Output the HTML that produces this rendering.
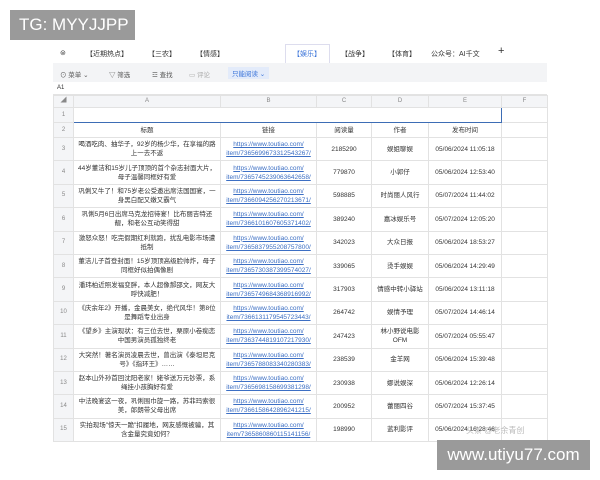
<!DOCTYPE html><html><head><meta charset="utf-8"><style>
*{margin:0;padding:0;box-sizing:border-box}
body{width:600px;height:480px;background:#fff;position:relative;overflow:hidden;font-family:"Liberation Sans","Noto Sans CJK SC",sans-serif;color:#333}
.tg{position:absolute;left:10px;top:10px;width:125px;height:30px;background:#9a9a9a;color:#fff;font-size:17px;line-height:30px;padding-left:9px}
.wm{position:absolute;left:437px;top:440px;width:153px;height:30px;background:#9a9a9a;color:#fff;font-size:17px;line-height:30px;text-align:center}
.tabs{position:absolute;left:53px;top:44px;width:494px;height:19px;font-size:7px;color:#333}
.tabs span{position:absolute;top:5px}
.act{position:absolute;left:232px;top:0;width:45px;height:19px;border:1px solid #dde;border-bottom:none;background:#fff}
.tb{position:absolute;left:53px;top:63px;width:494px;height:19px;background:#f3f4f6;font-size:6.5px;color:#555}
.tb span{position:absolute;top:6px}
.a1{position:absolute;left:53px;top:83px;width:494px;height:12px;font-size:6px;border-bottom:1px solid #e3e3e3}
table{position:absolute;left:53px;top:95px;border-collapse:collapse;table-layout:fixed;font-size:6.5px}
td{border:1px solid #e2e2e2;text-align:center;vertical-align:middle;line-height:9px;overflow:hidden;white-space:nowrap}
td.n{background:#f4f5f7;color:#888;font-size:6px}
tr.h td{background:#f4f5f7;color:#888;height:12px;font-size:6px}
tr.d td{height:23.4px}
td.t{white-space:normal;padding:0 3px}
td.l{color:#3c6fc4;text-decoration:underline}
</style></head><body>
<div class="tg">TG: MYYJJPP</div>
<div class="tabs"><div class="act"></div>
<span style="left:7px">⊜</span><span style="left:33px">【近期热点】</span><span style="left:95px">【三农】</span><span style="left:143px">【情感】</span><span style="left:240px;color:#3b74d9">【娱乐】</span><span style="left:288px">【战争】</span><span style="left:335px">【体育】</span><span style="left:378px">公众号：AI千文</span><span style="left:445px;font-size:11px;top:1px">+</span></div>
<div class="tb"><span style="left:7px">⊙ 菜单 ⌄</span><span style="left:56px">▽ 筛选</span><span style="left:99px">☲ 查找</span><span style="left:136px;color:#aaa">▭ 评论</span><span style="left:175px;color:#3b74d9;background:#e3ebfa;padding:1px 4px;top:4px">只能阅读 ⌄</span></div>
<div class="a1"><span style="position:absolute;left:4px;top:2px">A1</span></div>
<table>
<colgroup><col style="width:20px"><col style="width:147px"><col style="width:96px"><col style="width:55px"><col style="width:57px"><col style="width:73px"><col style="width:46px"></colgroup>
<tr class="h"><td>◢</td><td>A</td><td>B</td><td>C</td><td>D</td><td>E</td><td>F</td></tr>
<tr><td class="n" style="height:15px">1</td><td colspan="5" style="border:1.5px solid #3d6db5"></td><td></td></tr>
<tr><td class="n" style="height:15px">2</td><td>标题</td><td>链接</td><td>阅读量</td><td>作者</td><td>发布时间</td><td></td></tr>
<tr class="d"><td class="n">3</td><td class="t">喝酒吃肉、抽华子，92岁的杨少华，在享福的路上一去不返</td><td class="l">https://www.toutiao.com/<br>item/7365699673312543267/</td><td>2185290</td><td>娱姐聊娱</td><td>05/06/2024 11:05:18</td><td></td></tr>
<tr class="d"><td class="n">4</td><td class="t">44岁董洁和15岁儿子顶顶的首个杂志封面大片，母子温馨同框好有爱</td><td class="l">https://www.toutiao.com/<br>item/7365745239063642658/</td><td>779870</td><td>小郭仔</td><td>05/06/2024 12:53:40</td><td></td></tr>
<tr class="d"><td class="n">5</td><td class="t">巩俐又牛了！和75岁老公受邀出席法国国宴，一身黑白配又嫩又霸气</td><td class="l">https://www.toutiao.com/<br>item/7366094256270213671/</td><td>598885</td><td>时尚丽人风行</td><td>05/07/2024 11:44:02</td><td></td></tr>
<tr class="d"><td class="n">6</td><td class="t">巩俐5月6日出席马克龙招待宴！比布丽吉特还靓，和老公互动笑得甜</td><td class="l">https://www.toutiao.com/<br>item/7366101607605371402/</td><td>389240</td><td>嘉冰娱乐号</td><td>05/07/2024 12:05:20</td><td></td></tr>
<tr class="d"><td class="n">7</td><td class="t">激怒众怒！吃完假期红利就跑，扰乱电影市场遭抵制</td><td class="l">https://www.toutiao.com/<br>item/7365837955208757800/</td><td>342023</td><td>大众日报</td><td>05/06/2024 18:53:27</td><td></td></tr>
<tr class="d"><td class="n">8</td><td class="t">董洁儿子首登封面！15岁顶顶高级脸帅炸，母子同框好似拍偶像剧</td><td class="l">https://www.toutiao.com/<br>item/7365730387399574027/</td><td>339065</td><td>烫手娱娱</td><td>05/06/2024 14:29:49</td><td></td></tr>
<tr class="d"><td class="n">9</td><td class="t">潘玮柏近照发福变胖，本人超像郝邵文，网友大呼快减肥！</td><td class="l">https://www.toutiao.com/<br>item/7365749684368916992/</td><td>317903</td><td>情感中转小驿站</td><td>05/06/2024 13:11:18</td><td></td></tr>
<tr class="d"><td class="n">10</td><td class="t">《庆余年2》开播，金晨美女，绝代风华！第8位是舞蹈专业出身</td><td class="l">https://www.toutiao.com/<br>item/7366131179545723443/</td><td>264742</td><td>娱情予理</td><td>05/07/2024 14:46:14</td><td></td></tr>
<tr class="d"><td class="n">11</td><td class="t">《望乡》主演现状：有三位去世，栗原小卷痴恋中国男演员孤独终老</td><td class="l">https://www.toutiao.com/<br>item/7363744819107217930/</td><td>247423</td><td>林小野说电影<br>OFM</td><td>05/07/2024 05:55:47</td><td></td></tr>
<tr class="d"><td class="n">12</td><td class="t">大突然！著名演员凌晨去世，曾出演《泰坦尼克号》《指环王》……</td><td class="l">https://www.toutiao.com/<br>item/7365788083340280383/</td><td>238539</td><td>金羊网</td><td>05/06/2024 15:39:48</td><td></td></tr>
<tr class="d"><td class="n">13</td><td class="t">赵本山外孙首回沈阳老家！姥爷送万元钞票，系绳挂小孩胸好有爱</td><td class="l">https://www.toutiao.com/<br>item/7365698158699381298/</td><td>230938</td><td>娜说娱深</td><td>05/06/2024 12:26:14</td><td></td></tr>
<tr class="d"><td class="n">14</td><td class="t">中法晚宴这一夜，巩俐围巾旋一路，苏菲玛索很美，郎朗带父母出席</td><td class="l">https://www.toutiao.com/<br>item/7366158642896241215/</td><td>200952</td><td>蕾丽四谷</td><td>05/07/2024 15:37:45</td><td></td></tr>
<tr class="d"><td class="n">15</td><td class="t">实拍现场"惊天一跪"扣履地，网友感慨被骗，其含金量究竟如何？</td><td class="l">https://www.toutiao.com/<br>item/7365860860115141156/</td><td>198990</td><td>蓝利影评</td><td>05/06/2024 16:28:46</td><td></td></tr>
</table>
<div style="position:absolute;left:466px;top:425px;font-size:8px;color:#bbb">头条 @老余青创</div>
<div class="wm">www.utiyu77.com</div>
</body></html>
